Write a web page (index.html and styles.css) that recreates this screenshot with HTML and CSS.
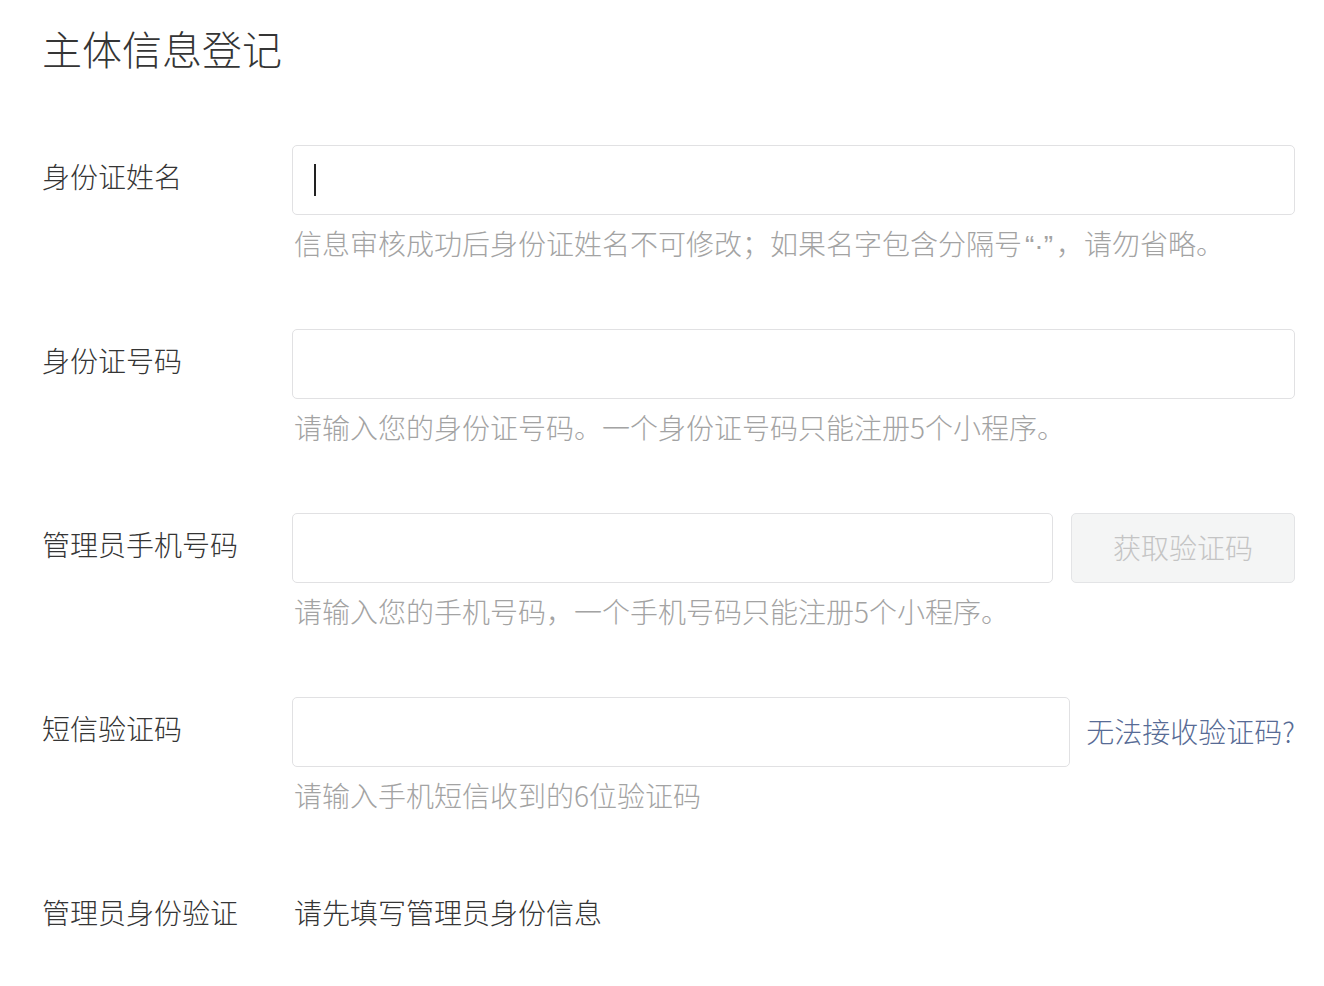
FILE: index.html
```html
<!DOCTYPE html>
<html lang="zh-CN">
<head>
<meta charset="utf-8">
<title>主体信息登记</title>
<link rel="stylesheet" href="styles.css">
</head>
<body>
<div class="page">
  <h1 class="title">主体信息登记</h1>

  <div class="row">
    <div class="label">身份证姓名</div>
    <div class="field">
      <div class="controls">
        <div class="input"><span class="caret"></span></div>
      </div>
      <div class="hint">信息审核成功后身份证姓名不可修改；如果名字包含分隔号<span class="latin">“·”</span>，请勿省略。</div>
    </div>
  </div>

  <div class="row">
    <div class="label">身份证号码</div>
    <div class="field">
      <div class="controls">
        <div class="input"></div>
      </div>
      <div class="hint">请输入您的身份证号码。一个身份证号码只能注册5个小程序。</div>
    </div>
  </div>

  <div class="row">
    <div class="label">管理员手机号码</div>
    <div class="field">
      <div class="controls">
        <div class="input"></div>
        <div class="btn">获取验证码</div>
      </div>
      <div class="hint">请输入您的手机号码，一个手机号码只能注册5个小程序。</div>
    </div>
  </div>

  <div class="row">
    <div class="label">短信验证码</div>
    <div class="field">
      <div class="controls">
        <div class="input"></div>
        <a class="link">无法接收验证码?</a>
      </div>
      <div class="hint">请输入手机短信收到的6位验证码</div>
    </div>
  </div>

  <div class="row row-last">
    <div class="label label-plain">管理员身份验证</div>
    <div class="value">请先填写管理员身份信息</div>
  </div>
</div>
</body>
</html>
```

FILE: styles.css
```css
html, body {
  margin: 0;
  padding: 0;
  background: #ffffff;
}
body {
  font-family: "PingFang SC", "Noto Sans CJK SC", "Noto Sans", sans-serif;
  font-weight: 300;
  color: #353535;
}
.page {
  padding: 20px 29px 0 42px;
}
.title {
  margin: 0;
  font-size: 40px;
  font-weight: 300;
  line-height: 56px;
  color: #353535;
}
.row {
  display: flex;
  margin-top: 69px;
}
.row + .row {
  margin-top: 66px;
}
.row-last.row {
  margin-top: 77px;
}
.label {
  width: 250px;
  flex: none;
  font-size: 28px;
  line-height: 40px;
  padding-top: 11px;
  color: #353535;
}
.label-plain {
  padding-top: 0;
}
.field {
  flex: 1;
  min-width: 0;
}
.controls {
  display: flex;
  align-items: center;
}
.input {
  flex: 1;
  height: 68px;
  border: 1px solid #e1e1e3;
  border-radius: 5px;
  display: flex;
  align-items: center;
  box-sizing: content-box;
}
.caret {
  display: block;
  width: 2px;
  height: 32px;
  margin-left: 21px;
  background: #222;
}
.btn {
  flex: none;
  width: 222px;
  height: 68px;
  margin-left: 18px;
  border: 1px solid #e3e4e6;
  border-radius: 5px;
  background: #f4f5f5;
  color: #c4c4c4;
  font-size: 28px;
  line-height: 66px;
  text-align: center;
}
.link {
  flex: none;
  margin-left: 16px;
  color: #576b95;
  font-size: 28px;
  line-height: 40px;
  margin-top: -3px;
  text-decoration: none;
}
.hint {
  margin-top: 8px;
  font-size: 28px;
  line-height: 40px;
  height: 40px;
  color: #a3a3a3;
  padding-left: 2px;
  white-space: nowrap;
}
.latin {
  font-family: "Liberation Sans", "Noto Sans", sans-serif;
  line-height: 1;
  padding: 0 3px;
}
.value {
  font-size: 28px;
  line-height: 40px;
  padding-left: 2px;
  color: #353535;
}
```
